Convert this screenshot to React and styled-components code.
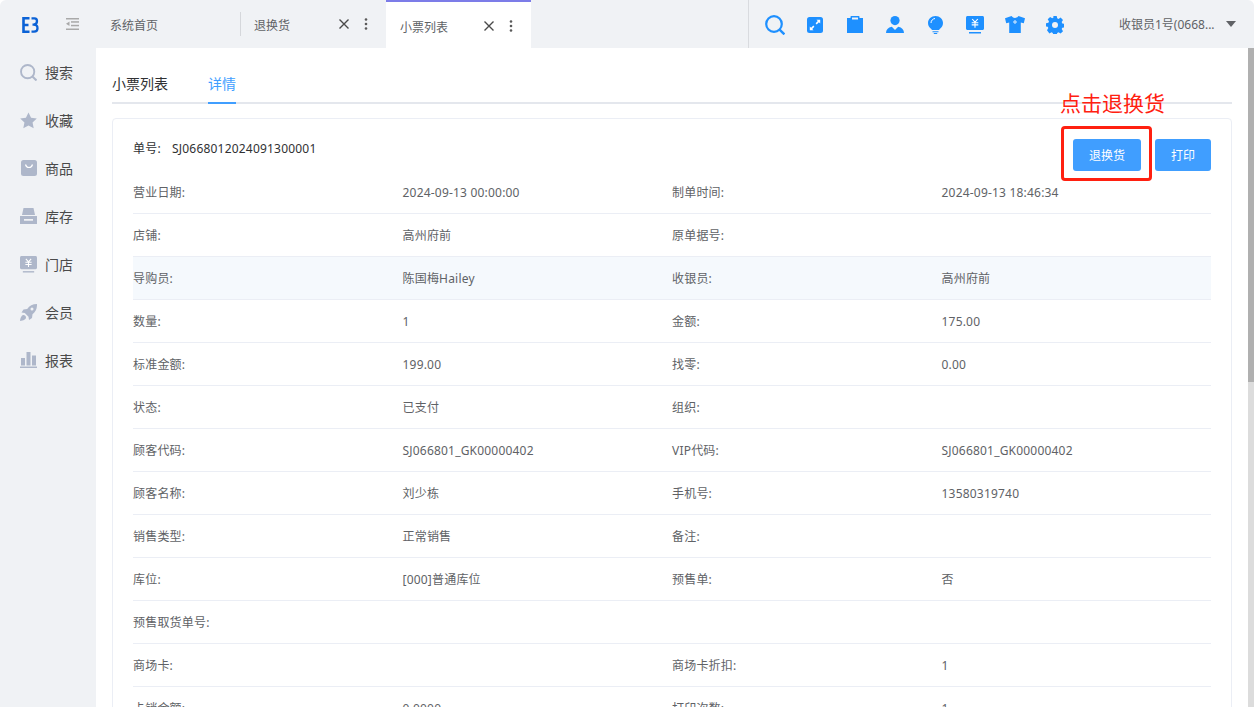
import React from 'react'
import styled, { createGlobalStyle } from 'styled-components'

const GlobalStyle = createGlobalStyle`
  html, body {
    margin: 0;
    height: 100%;
    overflow: hidden;
    background: #fff;
  }
  body {
    font-family: "Noto Sans", "Noto Sans CJK SC", sans-serif;
    font-size: 12px;
    color: #606266;
  }
  * {
    box-sizing: border-box;
  }
`

const Shell = styled.div`
  width: 1254px;
  height: 707px;
  display: flex;
  flex-direction: column;
  overflow: hidden;
  position: relative;
`

const Header = styled.header`
  height: 48px;
  flex: none;
  display: flex;
  background: #f0f2f5;
  border-radius: 6px 6px 0 0;
`

const LogoCell = styled.div`
  width: 60px;
  padding: 1px 0 0 22px;
  display: flex;
  align-items: center;
`

const Collapse = styled.div`
  width: 50px;
  padding-left: 6px;
  display: flex;
  align-items: center;
`

const Tab = styled.div`
  width: ${p => p.$w}px;
  height: 48px;
  padding: ${p => (p.$active ? 4 : 2)}px 0 0 ${p => p.$pad}px;
  display: flex;
  align-items: center;
  position: relative;
  color: #606266;
  background: ${p => (p.$active ? '#fff' : 'transparent')};
  border-top: ${p => (p.$active ? '2px solid #7c7ce8' : 'none')};
`

const Divider = styled.div`
  width: 1px;
  height: 24px;
  align-self: center;
  background: #d5d7db;
`

const TabTitle = styled.span`
  flex: 1;
`

const TabAction = styled.span`
  width: 22px;
  height: 16px;
  display: flex;
  align-items: center;
  justify-content: center;
  color: #4a4a4a;
`

const TabActions = styled.div`
  display: flex;
  margin-top: -2px;
  padding-right: ${p => p.$right}px;
`

const Tools = styled.div`
  margin-left: 217px;
  width: 506px;
  display: flex;
  align-items: center;
  border-left: 1px solid #d9dbdf;
  padding-left: 6px;
`

const ToolButton = styled.span`
  width: 40px;
  height: 48px;
  padding-top: 1px;
  display: flex;
  align-items: center;
  justify-content: center;
  color: #1e90ff;
`

const UserName = styled.span`
  margin-left: 44px;
  width: 107px;
  color: #606266;
  white-space: nowrap;
`

const Caret = styled.span`
  width: 0;
  height: 0;
  border-left: 5px solid transparent;
  border-right: 5px solid transparent;
  border-top: 6px solid #606266;
`

const Body = styled.div`
  flex: 1;
  min-height: 0;
  display: flex;
`

const Sidebar = styled.aside`
  width: 96px;
  flex: none;
  background: #f0f2f5;
`

const SideItem = styled.div`
  height: 48px;
  padding-left: 20px;
  display: flex;
  align-items: center;
  gap: 8px;
  font-size: 14px;
  color: #4a4a4a;
`

const SideIcon = styled.span`
  width: 17px;
  height: 18px;
  display: flex;
  align-items: center;
  justify-content: center;
  color: #aeb7ca;
`

const Main = styled.main`
  flex: 1;
  min-width: 0;
  padding: 0 16px;
  height: 659px;
  overflow: hidden;
`

const Scrollbar = styled.div`
  width: 6px;
  flex: none;
  height: 659px;
  background: #dcdcdc;
`

const ScrollThumb = styled.div`
  height: 334px;
  background: #b0b0b0;
`

const TabBar = styled.nav`
  margin-top: 20px;
  height: 36px;
  display: flex;
  gap: 40px;
  border-bottom: 2px solid #e4e7ed;
`

const TabLink = styled.a`
  height: 36px;
  line-height: 32px;
  font-size: 14px;
  color: ${p => (p.$active ? '#409eff' : '#303133')};
  border-bottom: 2px solid ${p => (p.$active ? '#409eff' : 'transparent')};
`

const Card = styled.section`
  margin-top: 14px;
  border: 1px solid #ebeef5;
  border-radius: 4px;
  padding: 0 20px;
  background: #fff;
`

const CardHead = styled.div`
  height: 52px;
  display: flex;
  align-items: flex-start;
  justify-content: space-between;
`

const OrderNo = styled.div`
  padding-top: 21px;
  line-height: 18px;
  letter-spacing: .2px;
  color: #303133;
`

const OrderLabel = styled.span`
  display: inline-block;
  width: 39px;
`

const Actions = styled.div`
  padding-top: 20px;
  display: flex;
  gap: 14px;
`

const Button = styled.button`
  width: ${p => p.$w}px;
  height: 32px;
  padding: 0;
  border: 0;
  border-radius: 3px;
  background: #409eff;
  color: #fff;
  font: inherit;
`

const Row = styled.div`
  height: 43px;
  display: grid;
  grid-template-columns: repeat(4, 1fr);
  align-items: center;
  border-bottom: 1px solid #ebeef5;
  background: ${p => (p.$hover ? '#f5f9fd' : 'transparent')};
`

const Cell = styled.span`
  color: #606266;
  letter-spacing: .2px;
  white-space: nowrap;
`

const Callout = styled.div`
  position: absolute;
  left: 1060px;
  top: 91px;
  font-size: 21px;
  line-height: 25px;
  color: #ff2010;
`

const CalloutBox = styled.div`
  position: absolute;
  left: 1061px;
  top: 126px;
  width: 91px;
  height: 55px;
  border: 3px solid #ff2010;
  border-radius: 4px;
`

const Logo = () => (
  <svg width="17" height="16" viewBox="0 0 17 16" fill="none" stroke="#0b62d6" strokeWidth="2.600">
    <path d="M7.500 1.300H1.500v13.400h6M1.500 8H6.500" />
    <path d="M9.500 1.300h3c1.800 0 2.500 1.200 2.500 2.700 0 2-1.200 3.500-3.300 3.700h-1.200M11.700 7.700c2.500 0 3.800 1.500 3.800 3.500 0 2.300-1.300 3.500-3.500 3.500H9.500" strokeWidth="2.300" />
  </svg>
)

const CollapseIcon = () => (
  <svg width="13" height="12" viewBox="0 0 13 12" fill="#a9a9a9">
    <rect width="13" height="1.500" />
    <rect x="5" y="3.200" width="8" height="1.500" />
    <rect x="5" y="6.800" width="8" height="1.500" />
    <rect y="10.500" width="13" height="1.500" />
    <path d="M3.500 3.500v4.500L0 5.800z" />
  </svg>
)

const CloseIcon = () => (
  <svg width="10" height="10" viewBox="0 0 10 10" stroke="#4a4a4a" strokeWidth="1.400" fill="none">
    <path d="M.5.500l9 9M9.500.500l-9 9" />
  </svg>
)

const DotsIcon = () => (
  <svg width="4" height="12" viewBox="0 0 4 12" fill="#5a5a5a">
    <circle cx="2" cy="1.500" r="1.300" />
    <circle cx="2" cy="6" r="1.300" />
    <circle cx="2" cy="10.500" r="1.300" />
  </svg>
)

const Search = ({ size = 20 }) => (
  <svg width={size} height={size} viewBox="0 0 20 20" fill="none" stroke="currentColor" strokeWidth="2.200">
    <circle cx="9" cy="9" r="7.800" />
    <path d="M14.600 14.600L19.400 19.400" strokeWidth="2.400" />
  </svg>
)

const Expand = () => (
  <svg width="16" height="16" viewBox="0 0 16 16">
    <rect width="16" height="16" rx="2.500" fill="currentColor" />
    <path d="M9.500 2.800h3.700v3.700l-1.300-1.300-2.200 2.200-1.100-1.100 2.200-2.200zM6.500 13.200H2.800V9.500l1.300 1.300 2.200-2.200 1.100 1.100-2.200 2.200z" fill="#fff" />
  </svg>
)

const Clipboard = () => (
  <svg width="16" height="17" viewBox="0 0 16 17">
    <path d="M0 2h3.500V.8C3.500.3 3.800 0 4.300 0h7.400c.5 0 .8.300.8.8V2H16v15H0zM5 1.400v2h6v-2z" fill="currentColor" fillRule="evenodd" />
  </svg>
)

const Person = () => (
  <svg width="18" height="17" viewBox="0 0 18 17" fill="currentColor">
    <circle cx="9" cy="4.600" r="4.600" />
    <path d="M0 17c0-3.500 2-5.500 5.800-6.300L9 14l3.200-3.300C16 11.500 18 13.500 18 17z" />
  </svg>
)

const Bulb = () => (
  <svg width="15" height="18" viewBox="0 0 15 18" fill="currentColor">
    <path d="M7.500 0C3.300 0 0 3 0 7c0 2.800 1.500 4.500 3 5.700.5.400.7.800.8 1.300h7.400c.1-.5.300-.900.8-1.300C13.500 11.500 15 9.800 15 7c0-4-3.300-7-7.500-7z" />
    <path d="M4.500 15.200h6v1h-6zM5.800 17h3.400v1H5.800z" />
    <path d="M3 7c0-2.500 1.800-4.200 4-4.500" stroke="#fff" strokeWidth="1" fill="none" />
  </svg>
)

const Yuan = ({ w = 18, h = 18 }) => (
  <svg width={w} height={h} viewBox="0 0 18 18" fill="currentColor">
    <path d="M1.500 0h15c.8 0 1.500.7 1.500 1.500v11c0 .8-.7 1.500-1.500 1.500h-15C.7 14 0 13.300 0 12.500v-11C0 .7.700 0 1.500 0z" />
    <rect x="3" y="16" width="12" height="1.500" />
    <path d="M6.200 3l2.800 3.200L11.800 3M5.700 6.700h6.600M5.700 8.900h6.600M9 6.200v5.500" stroke="#fff" strokeWidth="1.100" fill="none" />
  </svg>
)

const Shirt = () => (
  <svg width="20" height="17" viewBox="0 0 20 17">
    <path d="M6.500 0C7.500 1.300 8.600 2 10 2s2.500-.7 3.500-2L20 2.300l-1.200 5-3-.8V17H4.200V6.500l-3 .8L0 2.300z" fill="currentColor" />
    <circle cx="10" cy="6" r="1.200" fill="none" stroke="#fff" strokeWidth=".9" />
  </svg>
)

const Gear = () => (
  <svg width="18" height="18" viewBox="0 0 18 18">
    <path d="M7.300 0h3.400l.5 2.400 1.300.6L14.600 1.700l2.400 2.400-1.300 2.100.6 1.300 2.400.5v3.400l-2.400.5-.6 1.300 1.300 2.100-2.400 2.400-2.100-1.300-1.300.6-.5 2.400H7.300l-.5-2.400-1.300-.6-2.100 1.300L1 14.300l1.300-2.100-.6-1.300L0 10.700V7.300l2.400-.5.6-1.300L1.700 3.400 4.100 1l2.100 1.300 1.300-.6z" fill="currentColor" transform="translate(0 -.1)" />
    <circle cx="9" cy="9" r="3" fill="#f0f2f5" />
  </svg>
)

const Star = () => (
  <svg width="18" height="17" viewBox="0 0 18 17">
    <path d="M9 0l2.700 5.600 6.100.8-4.500 4.200 1.200 6.100L9 13.800l-5.500 2.900 1.200-6.100L.2 6.400l6.100-.8z" fill="currentColor" />
  </svg>
)

const Bag = () => (
  <svg width="16" height="16" viewBox="0 0 16 16">
    <rect width="16" height="16" rx="2.500" fill="currentColor" />
    <path d="M4.500 4.500c.5 2 1.800 3 3.500 3s3-1 3.500-3" fill="none" stroke="#fff" strokeWidth="1.200" />
  </svg>
)

const Store = () => (
  <svg width="17" height="16" viewBox="0 0 17 16" fill="currentColor">
    <path d="M3.500 0h10l1.500 7H2z" />
    <path d="M0 8h17v8H0zM4 11v1.800h9V11z" fillRule="evenodd" />
  </svg>
)

const Rocket = () => (
  <svg width="17" height="17" viewBox="0 0 17 17" fill="currentColor">
    <path d="M17 0c.2 4.500-1.300 8-4.500 10.300l-.5 3.700-3 2-.500-3.300-3.700-3.700L1.500 8.500l2-3 3.700-.5C9.500 1.800 12.500 0 17 0zm-5 3.500a1.500 1.500 0 100 3 1.500 1.500 0 000-3z" fillRule="evenodd" />
    <path d="M3.500 11c1.300 0 2.500 1.200 2.500 2.500 0 1.700-2.500 3.200-6 3.500.3-3.500 1.800-6 3.500-6z" />
  </svg>
)

const Bars = () => (
  <svg width="17" height="16" viewBox="0 0 17 16" fill="currentColor">
    <rect x="1" y="6" width="4" height="7.500" />
    <rect x="6.500" y="0" width="4" height="13.500" />
    <rect x="12" y="3.500" width="4" height="10" />
    <rect y="14.500" width="17" height="1.500" />
  </svg>
)

const sideItems = [
  ['搜索', <Search size={17} />],
  ['收藏', <Star />],
  ['商品', <Bag />],
  ['库存', <Store />],
  ['门店', <Yuan w={17} h={17} />],
  ['会员', <Rocket />],
  ['报表', <Bars />],
]

const tools = [
  <Search key="s" size={20} />,
  <Expand key="e" />,
  <Clipboard key="c" />,
  <Person key="p" />,
  <Bulb key="b" />,
  <Yuan key="y" />,
  <Shirt key="t" />,
  <Gear key="g" />,
]

const rows = [
  ['营业日期:', '2024-09-13 00:00:00', '制单时间:', '2024-09-13 18:46:34'],
  ['店铺:', '高州府前', '原单据号:', ''],
  ['导购员:', '陈国梅Hailey', '收银员:', '高州府前'],
  ['数量:', '1', '金额:', '175.00'],
  ['标准金额:', '199.00', '找零:', '0.00'],
  ['状态:', '已支付', '组织:', ''],
  ['顾客代码:', 'SJ066801_GK00000402', 'VIP代码:', 'SJ066801_GK00000402'],
  ['顾客名称:', '刘少栋', '手机号:', '13580319740'],
  ['销售类型:', '正常销售', '备注:', ''],
  ['库位:', '[000]普通库位', '预售单:', '否'],
  ['预售取货单号:', '', '', ''],
  ['商场卡:', '', '商场卡折扣:', '1'],
  ['卡销金额:', '0.0000', '打印次数:', '1'],
]

export default function App() {
  return (
    <Shell>
      <GlobalStyle />
      <Header>
        <LogoCell><Logo /></LogoCell>
        <Collapse><CollapseIcon /></Collapse>
        <Tab $w={130} $pad={0}>系统首页</Tab>
        <Divider />
        <Tab $w={145} $pad={13}>
          <TabTitle>退换货</TabTitle>
          <TabActions $right={9}>
            <TabAction><CloseIcon /></TabAction>
            <TabAction><DotsIcon /></TabAction>
          </TabActions>
        </Tab>
        <Tab $w={145} $pad={14} $active>
          <TabTitle>小票列表</TabTitle>
          <TabActions $right={9}>
            <TabAction><CloseIcon /></TabAction>
            <TabAction><DotsIcon /></TabAction>
          </TabActions>
        </Tab>
        <Tools>
          {tools.map(icon => <ToolButton key={icon.key}>{icon}</ToolButton>)}
          <UserName>收银员1号(0668...</UserName>
          <Caret />
        </Tools>
      </Header>
      <Body>
        <Sidebar>
          {sideItems.map(([label, icon]) => (
            <SideItem key={label}>
              <SideIcon>{icon}</SideIcon>
              {label}
            </SideItem>
          ))}
        </Sidebar>
        <Main>
          <TabBar>
            <TabLink>小票列表</TabLink>
            <TabLink $active>详情</TabLink>
          </TabBar>
          <Card>
            <CardHead>
              <OrderNo><OrderLabel>单号:</OrderLabel>SJ0668012024091300001</OrderNo>
              <Actions>
                <Button $w={68}>退换货</Button>
                <Button $w={56}>打印</Button>
              </Actions>
            </CardHead>
            {rows.map((row, i) => (
              <Row key={row[0]} $hover={i === 2}>
                {row.map((text, j) => <Cell key={j}>{text}</Cell>)}
              </Row>
            ))}
          </Card>
        </Main>
        <Scrollbar><ScrollThumb /></Scrollbar>
      </Body>
      <Callout>点击退换货</Callout>
      <CalloutBox />
    </Shell>
  )
}
